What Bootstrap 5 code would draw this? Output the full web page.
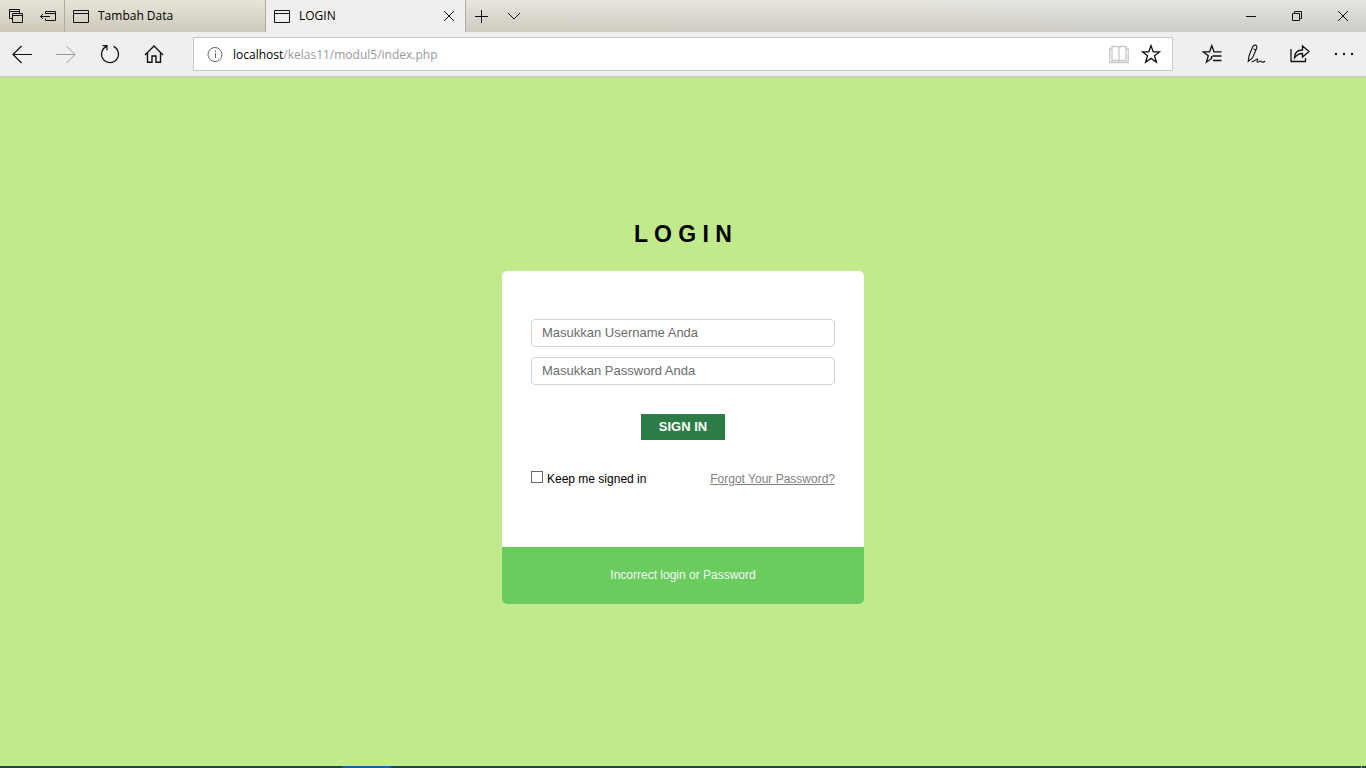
<!DOCTYPE html>
<html lang="id">
<head>
<meta charset="utf-8">
<meta name="viewport" content="width=device-width, initial-scale=1">
<title>LOGIN</title>
<link href="https://cdn.jsdelivr.net/npm/bootstrap@5.3.0/dist/css/bootstrap.min.css" rel="stylesheet">
<style>
  body { font-family: "Liberation Sans", Arial, sans-serif; font-size: 12px; line-height: 16px; color: #000; background: #c1ea8c; }
  svg { display: block; fill: none; stroke: #111; }

  /* browser frame */
  .chrome { font-family: "Open Sans", "Noto Sans", sans-serif; }
  .strip { height: 32px; background: linear-gradient(to bottom, rgba(255,255,255,.3), rgba(0,0,0,.07)), linear-gradient(to right, #dcd7c7, #dedbd0 50%, #dbdad6); }
  .icon-btn { width: 32px; padding: 0; border: 0; background: none; display: flex; align-items: center; justify-content: center; }
  .tools { width: 64px; }
  .tab-item { width: 201px; padding: 0 8px; border-left: 1px solid #b0aca1; }
  .tab-item.current { background: #f0efed; border-right: 1px solid #b0aca1; }
  .tab-item .icon-btn { width: 16px; }
  .tab-name { margin-left: 9px; }
  .win { width: 46px; }
  .bar { height: 45px; background: #f0efed; border-bottom: 1px solid #cccbc9; }
  .bar .nav-btn { width: 44px; }
  .address { height: 34px; margin: 0 17px; padding: 0 5px 0 13px; background: #fff; border: 1px solid #c8c8c8; }
  .url { margin-left: 10px; padding-top: 1px; color: #999; }
  .url b { font-weight: 400; color: #000; }
  .gray { stroke: #999; }
  .info { stroke: #666; }
  .pale { stroke: #c8c8c8; }
  .dots { fill: #111; stroke: none; }

  /* login page */
  .login-title { font-size: 23px; line-height: 28px; font-weight: 700; margin: 143px 0 23px; }
  .login-box { width: 100%; max-width: 362px; border: 0; border-radius: 5px; overflow: hidden; background: #fff; }
  .login-form { padding: 48px 29px 60px; }
  .fields { gap: 10px; }
  .login-form .form-control { height: 28px; padding: 0 10px 2px; font-size: 13px; border: 1px solid #d3d3d3; border-radius: 4px; color: #000; }
  .login-form .form-control::placeholder { color: #6c6c6c; }
  .sign-row { margin: 29px 0 31px; }
  .sign-in { width: 84px; height: 26px; padding: 0; border: 0; border-radius: 0; background: #2d7b46; color: #fff; font-size: 13px; line-height: 16px; font-weight: 700; }
  .sign-in:hover { background: #256639; color: #fff; }
  .keep-box { appearance: none; width: 12px; height: 12px; margin: 0; border: 1px solid #666; background: #fff; }
  .keep-box:checked { background: #2d7b46; }
  .forgot { color: #808080; }
  .notice { padding: 20px; background: #6acb5f; color: #f2f7f2; line-height: 17px; }
  .taskbar { height: 2px; background: #1b4950; }
  .running { width: 48px; margin-left: 343px; background: #0b6aa2; }
  .show-desktop { width: 5px; border-left: 1px solid #7d9599; }
</style>
</head>
<body>
<div class="d-flex flex-column min-vh-100">
  <header class="chrome">
    <div class="strip d-flex">
      <div class="tools d-flex">
        <button type="button" class="icon-btn" aria-label="Tabs"><svg width="16" height="16" viewBox="0 0 16 16"><path d="M4 10.500H1.500V1.500H11.500V5M1.500 3.500H11.500"/><path d="M4.500 5.500H14.500V14.500H4.500ZM4.500 7.500H14.500"/></svg></button>
        <button type="button" class="icon-btn" aria-label="Set tabs aside"><svg width="18" height="16" viewBox="0 0 18 16"><path d="M6.500 6V3.500H16.500V12.500H6.500V10.500M6.500 5.500H16.500M11 8.500H1.500M4 6L1.500 8.500L4 11"/></svg></button>
      </div>
      <div class="tab-item d-flex align-items-center">
        <svg width="16" height="14" viewBox="0 0 16 14"><path d="M.5 1.500H15.500V13.500H.5ZM.5 4.500H15.500"/></svg>
        <span class="tab-name flex-grow-1 text-truncate">Tambah Data</span>
      </div>
      <div class="tab-item current d-flex align-items-center">
        <svg width="16" height="14" viewBox="0 0 16 14"><path d="M.5 1.500H15.500V13.500H.5ZM.5 4.500H15.500"/></svg>
        <span class="tab-name flex-grow-1 text-truncate">LOGIN</span>
        <button type="button" class="icon-btn" aria-label="Close tab"><svg width="12" height="12" viewBox="0 0 12 12"><path d="M1 1L11 11M11 1L1 11"/></svg></button>
      </div>
      <button type="button" class="icon-btn" aria-label="New tab"><svg width="14" height="14" viewBox="0 0 14 14"><path d="M6.500 1V14M0 7.500H13"/></svg></button>
      <button type="button" class="icon-btn" aria-label="Tab list"><svg width="14" height="8" viewBox="0 0 14 8"><path d="M1 1L7 7L13 1"/></svg></button>
      <div class="d-flex ms-auto">
        <button type="button" class="icon-btn win" aria-label="Minimize"><svg width="10" height="10" viewBox="0 0 10 10"><path d="M0 5.500H10"/></svg></button>
        <button type="button" class="icon-btn win" aria-label="Restore"><svg width="10" height="10" viewBox="0 0 10 10"><path d="M.5 2.500H7.500V9.500H.5ZM2.500 2.500V.5H9.500V7.500H7.500"/></svg></button>
        <button type="button" class="icon-btn win" aria-label="Close"><svg width="10" height="10" viewBox="0 0 10 10"><path d="M0 0L10 10M10 0L0 10"/></svg></button>
      </div>
    </div>
    <div class="bar d-flex align-items-center">
      <button type="button" class="icon-btn nav-btn" aria-label="Back"><svg width="20" height="20" viewBox="0 0 20 20" stroke-width="1.200"><path d="M20 10.500H1M9.500 2L1 10.500L9.500 19"/></svg></button>
      <button type="button" class="icon-btn nav-btn" aria-label="Forward"><svg class="gray" width="20" height="20" viewBox="0 0 20 20"><path d="M0 10.500H19M10.500 2L19 10.500L10.500 19"/></svg></button>
      <button type="button" class="icon-btn nav-btn" aria-label="Refresh"><svg width="20" height="20" viewBox="0 0 20 20" stroke-width="1.200"><path d="M13.500 2.400A8.500 8.500 0 1 1 6.500 2.400M2.500 1.700H7V6.200"/></svg></button>
      <button type="button" class="icon-btn nav-btn" aria-label="Home"><svg width="20" height="20" viewBox="0 0 20 20" stroke-width="1.400"><path d="M1 11L10 2L19 11M3.500 9V18.300H8V12H12V18.300H16.500V9"/></svg></button>
      <div class="address d-flex align-items-center flex-grow-1">
        <svg width="16" height="16" viewBox="0 0 16 16" class="info"><circle cx="8" cy="8.500" r="7"/><path d="M8.500 7V12M8.500 4.500V6"/></svg>
        <span class="url flex-grow-1 text-truncate"><b>localhost</b>/kelas11/modul5/index.php</span>
        <button type="button" class="icon-btn" aria-label="Reading view"><svg class="pale" width="20" height="20" viewBox="0 0 20 20" stroke-width="1.300"><path d="M3 2.500H7.500Q10 2.500 10 4Q10 2.500 12.500 2.500H17V16.500H3ZM3 4.500H.8V18.500H19.200V4.500H17M10 4V18.500"/></svg></button>
        <button type="button" class="icon-btn" aria-label="Add to favorites"><svg width="20" height="20" viewBox="0 0 20 20" stroke-width="1.300"><path d="M10 1.600L12.200 7.800H18.700L13.500 11.800L15.400 18.200L10 14.400L4.600 18.200L6.500 11.800L1.300 7.800H7.800Z"/></svg></button>
      </div>
      <button type="button" class="icon-btn nav-btn" aria-label="Favorites"><svg width="20" height="20" viewBox="0 0 20 20" stroke-width="1.300"><path d="M19.500 7.800H12L9.800 1.600L7.600 7.800H1.200L6.300 11.800L4.400 18.200L9.600 14.500V12M10.500 12H19.500M11 16.500H19.500"/></svg></button>
      <button type="button" class="icon-btn nav-btn" aria-label="Add notes"><svg width="20" height="20" viewBox="0 0 20 20" stroke-width="1.100"><path d="M2.200 17.500L3 12L6.500 3Q8 .5 10 1.300Q11.300 2.300 10.500 4.500L6.500 14L2.200 17.500ZM7.500 5L9.500 5.800M5.500 17.800C8.500 18 10.500 14.500 11.500 15C12.500 15.600 10 18 11.700 18.200C13.200 18.300 13.700 16.500 15 17.300C16.200 18.300 17.500 18.500 19 17"/></svg></button>
      <button type="button" class="icon-btn nav-btn" aria-label="Share"><svg width="20" height="20" viewBox="0 0 20 20" stroke-width="1.300"><path d="M1 5V17.500H15.500V14M4.500 14C4.500 9 7 6 12.500 6V2L19 7.500L12.500 13V9.500C8.500 9.500 6.500 11 4.500 14Z"/></svg></button>
      <button type="button" class="icon-btn nav-btn" aria-label="More"><svg class="dots" width="20" height="20" viewBox="0 0 20 20"><circle cx="2" cy="10" r="1.200"/><circle cx="10" cy="10" r="1.200"/><circle cx="18" cy="10" r="1.200"/></svg></button>
    </div>
  </header>

  <main class="d-flex flex-column align-items-center flex-grow-1">
    <h1 class="login-title">L O G I N</h1>
    <div class="card login-box">
      <form class="login-form">
        <div class="fields d-grid">
          <input type="text" class="form-control" aria-label="Username" placeholder="Masukkan Username Anda">
          <input type="password" class="form-control" aria-label="Password" placeholder="Masukkan Password Anda">
        </div>
        <div class="sign-row d-flex justify-content-center">
          <button type="submit" class="btn sign-in">SIGN IN</button>
        </div>
        <div class="d-flex justify-content-between">
          <div class="d-flex">
            <input id="keep" type="checkbox" class="keep-box">
            <label for="keep" class="ms-1">Keep me signed in</label>
          </div>
          <a href="#" class="forgot">Forgot Your Password?</a>
        </div>
      </form>
      <div class="notice text-center">Incorrect login or Password</div>
    </div>
  </main>
  <footer class="taskbar d-flex"><div class="running"></div><div class="show-desktop ms-auto"></div></footer>
</div>
<script src="https://cdn.jsdelivr.net/npm/bootstrap@5.3.0/dist/js/bootstrap.bundle.min.js"></script>
</body>
</html>
